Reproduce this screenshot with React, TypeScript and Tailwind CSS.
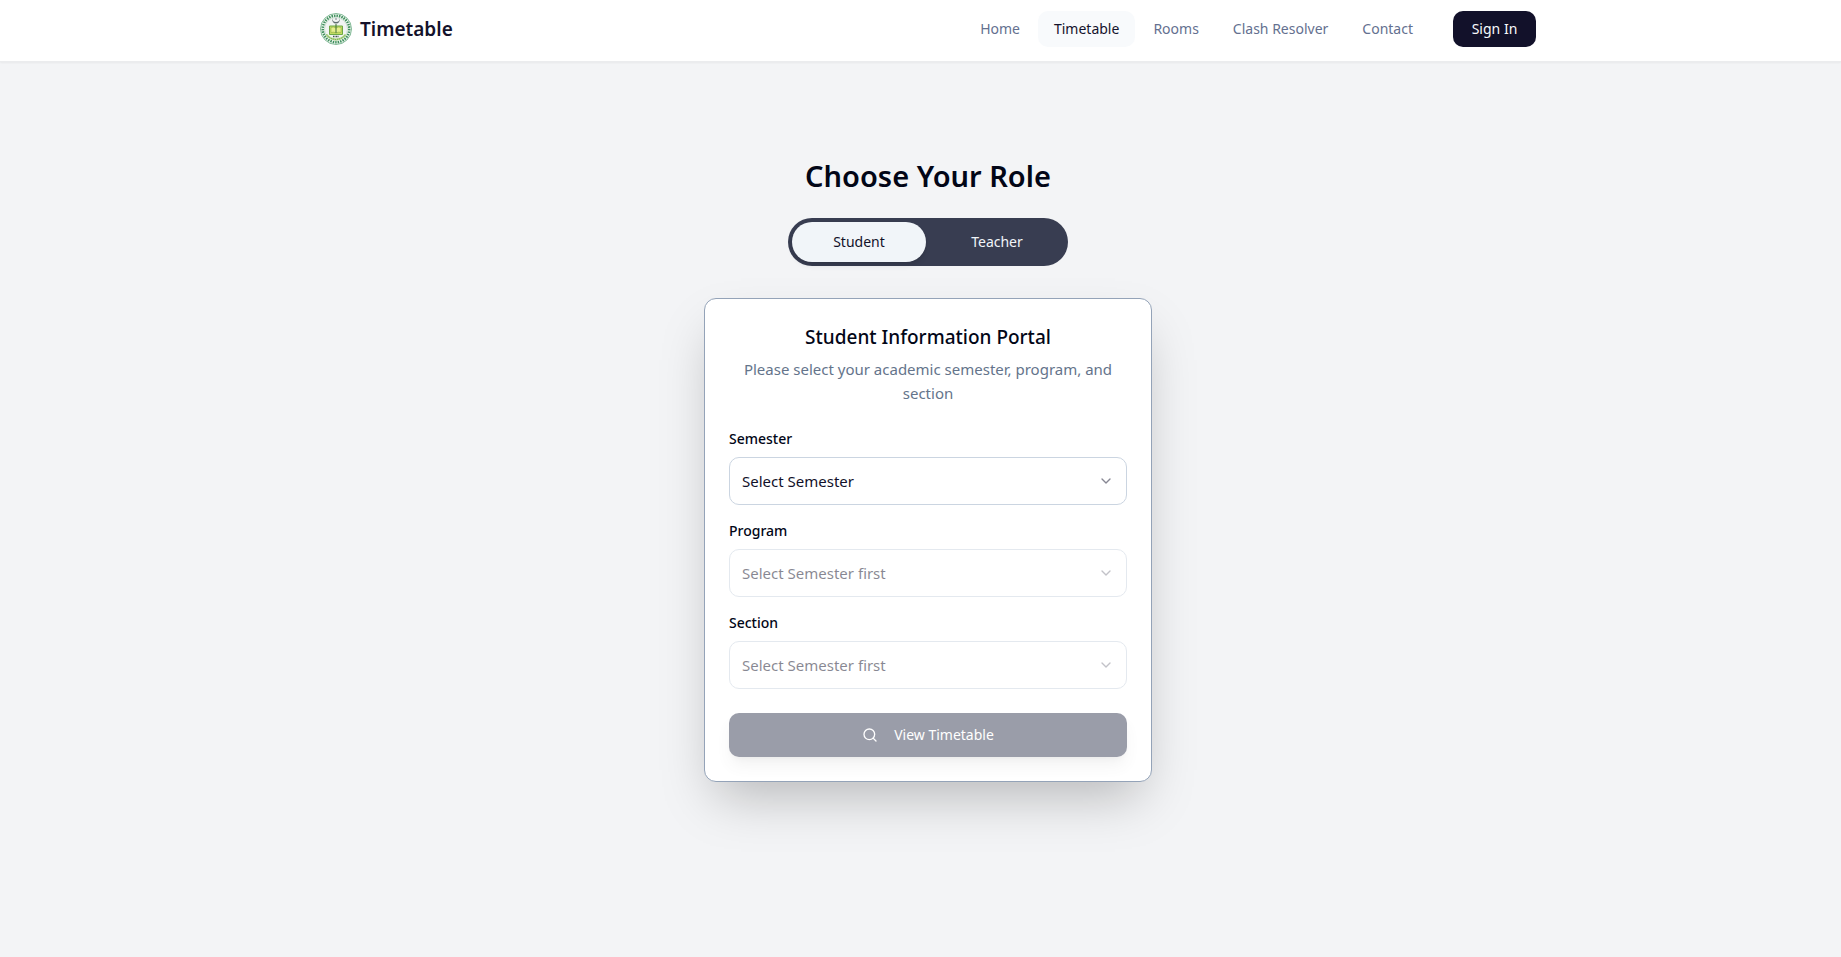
import { useState } from "react";
import { ChevronDown, Search } from "lucide-react";

type Role = "Student" | "Teacher";

const ROLES: Role[] = ["Student", "Teacher"];

const NAV_LINKS = ["Home", "Timetable", "Rooms", "Clash Resolver", "Contact"];

function UniversityLogo() {
  return (
    <svg viewBox="0 0 64 64" className="h-8 w-8" aria-hidden="true">
      <circle cx="32" cy="32" r="31" fill="#f4f9f4" stroke="#5aa375" strokeWidth="1.500" />
      {/* lettering ring */}
      <circle cx="32" cy="32" r="26.500" fill="none" stroke="#3f8f5d" strokeWidth="5" strokeDasharray="3 2" />
      <circle cx="32" cy="32" r="23" fill="#f1f4f3" stroke="#a9c9b3" strokeWidth="1" />
      {/* crescent and star */}
      <path d="M25 11a7.500 7.500 0 1 0 14 0 6 6 0 1 1-14 0z" fill="#5f6c70" />
      <circle cx="32" cy="12" r="1.500" fill="#5f6c70" />
      {/* shield with open book */}
      <path d="M19 26h26v17H19z" fill="#c3dc62" stroke="#6fa845" strokeWidth="2" />
      <path d="M22 29q5-2 10 1 5-3 10-1v10q-5-2-10 1-5-3-10-1z" fill="#e6ee8c" stroke="#86a63c" strokeWidth="1" />
      <path d="M32 22v18" stroke="#3d6f35" strokeWidth="2" />
      <path d="M26 47h12" stroke="#43544b" strokeWidth="3" strokeDasharray="2 1" />
      {/* ribbon */}
      <path d="M13 43q6 9 19 10 13-1 19-10" fill="none" stroke="#b5d884" strokeWidth="4" />
      <path d="M13 43q6 9 19 10 13-1 19-10" fill="none" stroke="#4f9450" strokeWidth="1.500" strokeDasharray="2 2" />
    </svg>
  );
}

function Navbar() {
  return (
    <header className="border-b border-[#ebecee] bg-white pt-[11px] pb-[14px] pl-[15px] shadow-xs">
      <div className="mx-auto flex h-9 max-w-7xl items-center justify-between px-8">
        <a href="#" className="flex items-center gap-2">
          <UniversityLogo />
          <span className="text-[19px] font-semibold text-[#14122b]">Timetable</span>
        </a>

        <div className="flex items-center gap-6">
          <nav className="flex items-center gap-0.5">
            {NAV_LINKS.map((link) => (
              <a
                key={link}
                href="#"
                className={`rounded-[10px] px-4 py-2 text-sm leading-5 ${
                  link === "Timetable"
                    ? "bg-[#f8fafc] text-[#14122b]"
                    : "text-[#64708f] hover:text-[#14122b]"
                }`}
              >
                {link}
              </a>
            ))}
          </nav>
          <button
            type="button"
            className="w-[83px] rounded-[10px] bg-[#12112a] py-2 text-center text-sm leading-5 text-[#f8fafc]"
          >
            Sign In
          </button>
        </div>
      </div>
    </header>
  );
}

interface SelectFieldProps {
  id: string;
  label: string;
  placeholder: string;
  options?: string[];
  disabled?: boolean;
}

function SelectField({ id, label, placeholder, options = [], disabled = false }: SelectFieldProps) {
  return (
    <div className="flex flex-col gap-2">
      <label htmlFor={id} className="text-sm leading-5 font-medium text-[#020617]">
        {label}
      </label>
      <div className={`relative ${disabled ? "opacity-50" : ""}`}>
        <select
          id={id}
          disabled={disabled}
          defaultValue=""
          className="block h-12 w-full appearance-none rounded-[10px] border border-[#cbd5e1] bg-white px-3 text-[15px] text-[#12112a] opacity-100"
        >
          <option value="">{placeholder}</option>
          {options.map((option) => (
            <option key={option}>{option}</option>
          ))}
        </select>
        <ChevronDown className="pointer-events-none absolute top-4 right-[13px] h-4 w-4 text-[#12112a] opacity-50" />
      </div>
    </div>
  );
}

export default function App() {
  const [role, setRole] = useState<Role>("Student");

  return (
    <div className="min-h-screen bg-gray-100 font-['Noto_Sans',sans-serif]">
      <Navbar />

      <main className="flex flex-col items-center pt-24 pb-24 pl-[15px]">
        <h1 className="text-[29px] leading-9 font-semibold text-[#020617]">Choose Your Role</h1>

        <div className="mt-6 flex h-12 w-[280px] gap-1 rounded-full bg-[#383d51] p-1">
          {ROLES.map((r) => (
            <button
              key={r}
              type="button"
              aria-pressed={role === r}
              onClick={() => setRole(r)}
              className={`flex-1 rounded-full text-sm ${
                role === r ? "bg-[#f1f5f9] text-[#12112a] shadow-md" : "text-[#f1f5f9]"
              }`}
            >
              {r}
            </button>
          ))}
        </div>

        <section className="mt-8 w-full max-w-md rounded-xl border border-[#94a3b8] bg-white p-6 shadow-2xl">
          <div className="flex flex-col gap-1.5 text-center">
            <h2 className="text-[19px] leading-7 font-medium text-[#020617]">
              {role} Information Portal
            </h2>
            <p className="text-[15px] leading-6 text-[#64748b]">
              Please select your academic semester, program, and section
            </p>
          </div>

          <form className="mt-6 flex flex-col gap-4">
            <SelectField
              id="semester"
              label="Semester"
              placeholder="Select Semester"
              options={["Fall", "Spring"]}
            />
            <SelectField id="program" label="Program" placeholder="Select Semester first" disabled />
            <SelectField id="section" label="Section" placeholder="Select Semester first" disabled />
            <button
              type="submit"
              disabled
              className="mt-2 flex h-11 items-center justify-center gap-4 rounded-[10px] bg-[#383d55] text-sm text-white opacity-50 shadow-lg"
            >
              <Search className="h-4 w-4" />
              View Timetable
            </button>
          </form>
        </section>
      </main>
    </div>
  );
}
